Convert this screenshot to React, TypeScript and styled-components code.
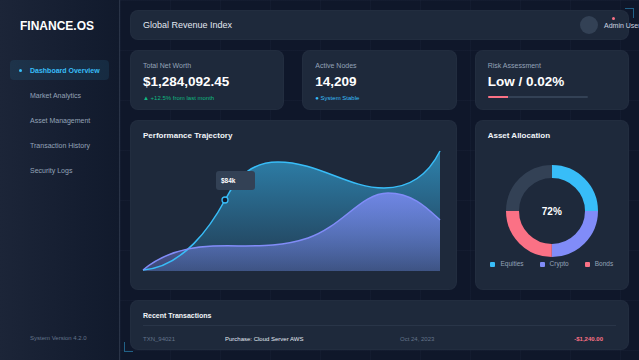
import * as React from 'react';
import styled, { createGlobalStyle } from 'styled-components';

// palette pulled from the slate / sky scheme
const C = {
  bg: '#0f172a',
  card: '#1e293b',
  line: '#334155',
  text: '#f1f5f9',
  muted: '#94a3b8',
  dim: '#64748b',
  cyan: '#38bdf8',
  violet: '#818cf8',
  rose: '#fb7185',
  green: '#10b981',
};

const GlobalStyle = createGlobalStyle`
  html, body {
    margin: 0;
    padding: 0;
    background: ${C.bg};
    overflow: hidden;
  }
  body {
    font-family: "Liberation Sans", Arial, sans-serif;
    color: ${C.text};
  }
  * { box-sizing: border-box; }
`;

const Shell = styled.div`
  display: flex;
  width: 100vw;
  height: 100vh;
`;

const Sidebar = styled.aside`
  width: 120px;
  flex-shrink: 0;
  display: flex;
  flex-direction: column;
  padding: 20px 10px 10px;
  background: linear-gradient(90deg, #1c2538 0%, #141d30 70%, #111a2c 100%);
  border-right: 1px solid rgba(148, 163, 184, 0.12);
`;

const Logo = styled.div`
  padding-left: 10px;
  font-size: 12px;
  line-height: 12px;
  font-weight: 700;
  color: #fff;
`;

const Nav = styled.nav`
  margin-top: 28px;
  display: flex;
  flex-direction: column;
  gap: 5px;
`;

const NavItem = styled.div<{ $active?: boolean }>`
  position: relative;
  height: 20px;
  display: flex;
  align-items: center;
  padding-left: 20px;
  border-radius: 4px;
  font-size: 7px;
  font-weight: ${(p) => (p.$active ? 700 : 400)};
  color: ${(p) => (p.$active ? C.cyan : C.muted)};
  background: ${(p) => (p.$active ? 'rgba(56, 189, 248, 0.1)' : 'transparent')};

  &::before {
    content: '';
    display: ${(p) => (p.$active ? 'block' : 'none')};
    position: absolute;
    left: 9px;
    top: 8.5px;
    width: 3px;
    height: 3px;
    border-radius: 50%;
    background: ${C.cyan};
  }
`;

const Version = styled.div`
  margin-top: auto;
  margin-bottom: 8px;
  padding-left: 20px;
  font-size: 6px;
  line-height: 8px;
  color: ${C.dim};
`;

const Main = styled.main`
  flex: 1;
  position: relative;
  padding: 10px;
  display: grid;
  grid-template-columns: repeat(3, 1fr);
  grid-template-rows: 30px 60px 1fr 50px;
  column-gap: 18px;
  row-gap: 10px;
  background-color: ${C.bg};
  background-image: linear-gradient(rgba(148, 163, 184, 0.035) 1px, transparent 1px),
    linear-gradient(90deg, rgba(148, 163, 184, 0.035) 1px, transparent 1px);
  background-size: 50px 50px;
`;

const Corner = styled.span<{ $pos: 'tr' | 'bl' }>`
  position: absolute;
  width: 9px;
  height: 10px;
  border-color: rgba(56, 189, 248, 0.45);
  border-style: solid;
  border-width: ${(p) => (p.$pos === 'tr' ? '1.5px 1.5px 0 0' : '0 0 1.5px 1.5px')};
  ${(p) => (p.$pos === 'tr' ? 'top: 8px; right: 5px;' : 'bottom: 8px; left: 4px;')}
  z-index: 2;
`;

const Card = styled.section<{ $span?: number }>`
  background: ${C.card};
  border-radius: 8px;
  border: 1px solid rgba(148, 163, 184, 0.04);
  grid-column: span ${(p) => p.$span ?? 1};
  min-width: 0;
`;

const Header = styled(Card)`
  display: flex;
  align-items: center;
  justify-content: space-between;
  padding: 0 12px;
`;

const HeaderTitle = styled.h1`
  margin: 0;
  font-size: 9px;
  font-weight: 400;
  color: #e2e8f0;
`;

const UserBlock = styled.div`
  position: relative;
  width: 36px;
  display: flex;
  align-items: center;
  gap: 6px;
  white-space: nowrap;
`;

const Avatar = styled.div`
  width: 18px;
  height: 18px;
  flex-shrink: 0;
  border-radius: 50%;
  background: ${C.line};
`;

const UserName = styled.span`
  font-size: 7px;
  color: #cbd5e1;
`;

const Ping = styled.span`
  position: absolute;
  left: 32px;
  top: 1px;
  width: 3px;
  height: 3px;
  border-radius: 50%;
  background: ${C.rose};
`;

const StatCard = styled(Card)`
  padding: 10px 12px;
  display: flex;
  flex-direction: column;
`;

const StatLabel = styled.div`
  font-size: 7px;
  line-height: 9px;
  color: ${C.muted};
`;

const StatValue = styled.div`
  margin-top: 4px;
  font-size: 13.5px;
  line-height: 16px;
  font-weight: 700;
  color: #fff;
`;

const StatNote = styled.div<{ $tone: string }>`
  margin-top: 4px;
  font-size: 6px;
  line-height: 8px;
  color: ${(p) => p.$tone};
`;

const Track = styled.div`
  margin-top: 6px;
  width: 100px;
  height: 2px;
  background: ${C.line};
  border-radius: 1px;
  overflow: hidden;
`;

const Fill = styled.div`
  height: 100%;
  background: ${C.rose};
`;

const PanelTitle = styled.h2`
  margin: 0;
  font-size: 8px;
  line-height: 10px;
  font-weight: 700;
  color: #f1f5f9;
`;

const ChartCard = styled(Card)`
  padding: 10px 12px;
`;

const ChartBox = styled.div`
  position: relative;
  margin-top: 10px;
  width: 298px;
  height: 120px;

  svg { display: block; overflow: visible; }
`;

const Tip = styled.div`
  position: absolute;
  left: 73px;
  top: 20px;
  width: 39px;
  height: 19px;
  padding-left: 5px;
  display: flex;
  align-items: center;
  border-radius: 3px;
  background: ${C.line};
  font-size: 6.5px;
  font-weight: 700;
  color: #fff;
`;

const AllocCard = styled(Card)`
  padding: 10px 12px;
  display: flex;
  flex-direction: column;
  align-items: center;
  ${PanelTitle} { align-self: stretch; }
`;

const DonutWrap = styled.div`
  position: relative;
  margin-top: 24px;
  width: 92px;
  height: 92px;

  svg { display: block; }
`;

const DonutLabel = styled.div`
  position: absolute;
  inset: 0;
  display: flex;
  align-items: center;
  justify-content: center;
  font-size: 10px;
  font-weight: 700;
  color: #fff;
`;

const Legend = styled.div`
  margin-top: 3px;
  display: flex;
  gap: 16px;
  font-size: 6.5px;
  line-height: 8px;
  color: ${C.muted};
`;

const LegendItem = styled.span<{ $color: string }>`
  display: flex;
  align-items: center;
  gap: 5px;

  &::before {
    content: '';
    width: 5px;
    height: 5px;
    border-radius: 1px;
    background: ${(p) => p.$color};
  }
`;

const TxCard = styled(Card)`
  padding: 10px 12px 0;
  overflow: hidden;
`;

const TxHead = styled.div`
  padding-bottom: 4px;
  border-bottom: 1px solid rgba(148, 163, 184, 0.1);

  ${PanelTitle} { font-size: 7px; }
`;

const TxRow = styled.div`
  display: grid;
  grid-template-columns: 82px 175px 1fr auto;
  align-items: center;
  padding: 8px 13px 0 0;
  font-size: 6px;
  line-height: 10px;
`;

const TxCell = styled.span<{ $tone?: string; $bold?: boolean }>`
  color: ${(p) => p.$tone ?? C.dim};
  font-weight: ${(p) => (p.$bold ? 700 : 400)};
`;

const cyanLine = 'M0,119 C40,116 68,75 82,49 C96,22 112,11 135,11 C175,11 205,37 241,37 C268,37 286,22 297,0';
const violetLine = 'M0,119 C18,104 40,96 70,95 C105,94 132,98 165,87 C200,75 218,42 245,42 C270,42 285,58 297,69';

const Trajectory = () => (
  <ChartBox>
    <svg width="298" height="120" viewBox="0 0 298 120">
      <defs>
        <linearGradient id="gCyan" x1="0" y1="0" x2="0" y2="1">
          <stop offset="0%" stopColor={C.cyan} stopOpacity="0.6" />
          <stop offset="100%" stopColor={C.cyan} stopOpacity="0.12" />
        </linearGradient>
        <linearGradient id="gViolet" x1="0" y1="0" x2="0" y2="1">
          <stop offset="0%" stopColor={C.violet} stopOpacity="0.8" />
          <stop offset="100%" stopColor={C.violet} stopOpacity="0.3" />
        </linearGradient>
      </defs>
      <path d={`${cyanLine} L297,120 L0,120 Z`} fill="url(#gCyan)" />
      <path d={`${violetLine} L297,120 L0,120 Z`} fill="url(#gViolet)" />
      <path d={cyanLine} fill="none" stroke={C.cyan} strokeWidth="1.5" />
      <path d={violetLine} fill="none" stroke={C.violet} strokeWidth="1.5" />
      <circle cx="82" cy="49" r="3" fill={C.bg} stroke={C.cyan} strokeWidth="1.3" />
    </svg>
    <Tip>$84k</Tip>
  </ChartBox>
);

const slices = [C.cyan, C.violet, C.rose, C.line];

const Donut = () => {
  const r = 39.5;
  const circ = 2 * Math.PI * r;
  const q = circ / 4;
  return (
    <DonutWrap>
      <svg width="92" height="92" viewBox="0 0 92 92">
        <g transform="rotate(-90 46 46)">
          {slices.map((c, i) => (
            <circle
              key={c}
              cx="46"
              cy="46"
              r={r}
              fill="none"
              stroke={c}
              strokeWidth="13"
              strokeDasharray={`${q} ${circ - q}`}
              strokeDashoffset={-q * i}
            />
          ))}
        </g>
      </svg>
      <DonutLabel>72%</DonutLabel>
    </DonutWrap>
  );
};

const navLinks = ['Dashboard Overview', 'Market Analytics', 'Asset Management', 'Transaction History', 'Security Logs'];

const App = () => {
  return (
    <>
      <GlobalStyle />
      <Shell>
        <Sidebar>
          <Logo>FINANCE.OS</Logo>
          <Nav>
            {navLinks.map((l, i) => (
              <NavItem key={l} $active={i === 0}>
                {l}
              </NavItem>
            ))}
          </Nav>
          <Version>System Version 4.2.0</Version>
        </Sidebar>

        <Main>
          <Corner $pos="tr" />
          <Corner $pos="bl" />

          <Header $span={3}>
            <HeaderTitle>Global Revenue Index</HeaderTitle>
            <UserBlock>
              <Avatar />
              <UserName>Admin User</UserName>
              <Ping />
            </UserBlock>
          </Header>

          <StatCard>
            <StatLabel>Total Net Worth</StatLabel>
            <StatValue>$1,284,092.45</StatValue>
            <StatNote $tone={C.green}>▲ +12.5% from last month</StatNote>
          </StatCard>
          <StatCard>
            <StatLabel>Active Nodes</StatLabel>
            <StatValue>14,209</StatValue>
            <StatNote $tone={C.cyan}>● System Stable</StatNote>
          </StatCard>
          <StatCard>
            <StatLabel>Risk Assessment</StatLabel>
            <StatValue>Low / 0.02%</StatValue>
            <Track>
              <Fill style={{ width: '20%' }} />
            </Track>
          </StatCard>

          <ChartCard $span={2}>
            <PanelTitle>Performance Trajectory</PanelTitle>
            <Trajectory />
          </ChartCard>
          <AllocCard>
            <PanelTitle>Asset Allocation</PanelTitle>
            <Donut />
            <Legend>
              <LegendItem $color={C.cyan}>Equities</LegendItem>
              <LegendItem $color={C.violet}>Crypto</LegendItem>
              <LegendItem $color={C.rose}>Bonds</LegendItem>
            </Legend>
          </AllocCard>

          <TxCard $span={3}>
            <TxHead>
              <PanelTitle>Recent Transactions</PanelTitle>
            </TxHead>
            <TxRow>
              <TxCell>TXN_94021</TxCell>
              <TxCell $tone="#e2e8f0">Purchase: Cloud Server AWS</TxCell>
              <TxCell>Oct 24, 2023</TxCell>
              <TxCell $tone={C.rose} $bold>-$1,240.00</TxCell>
            </TxRow>
          </TxCard>
        </Main>
      </Shell>
    </>
  );
};

export default App;
